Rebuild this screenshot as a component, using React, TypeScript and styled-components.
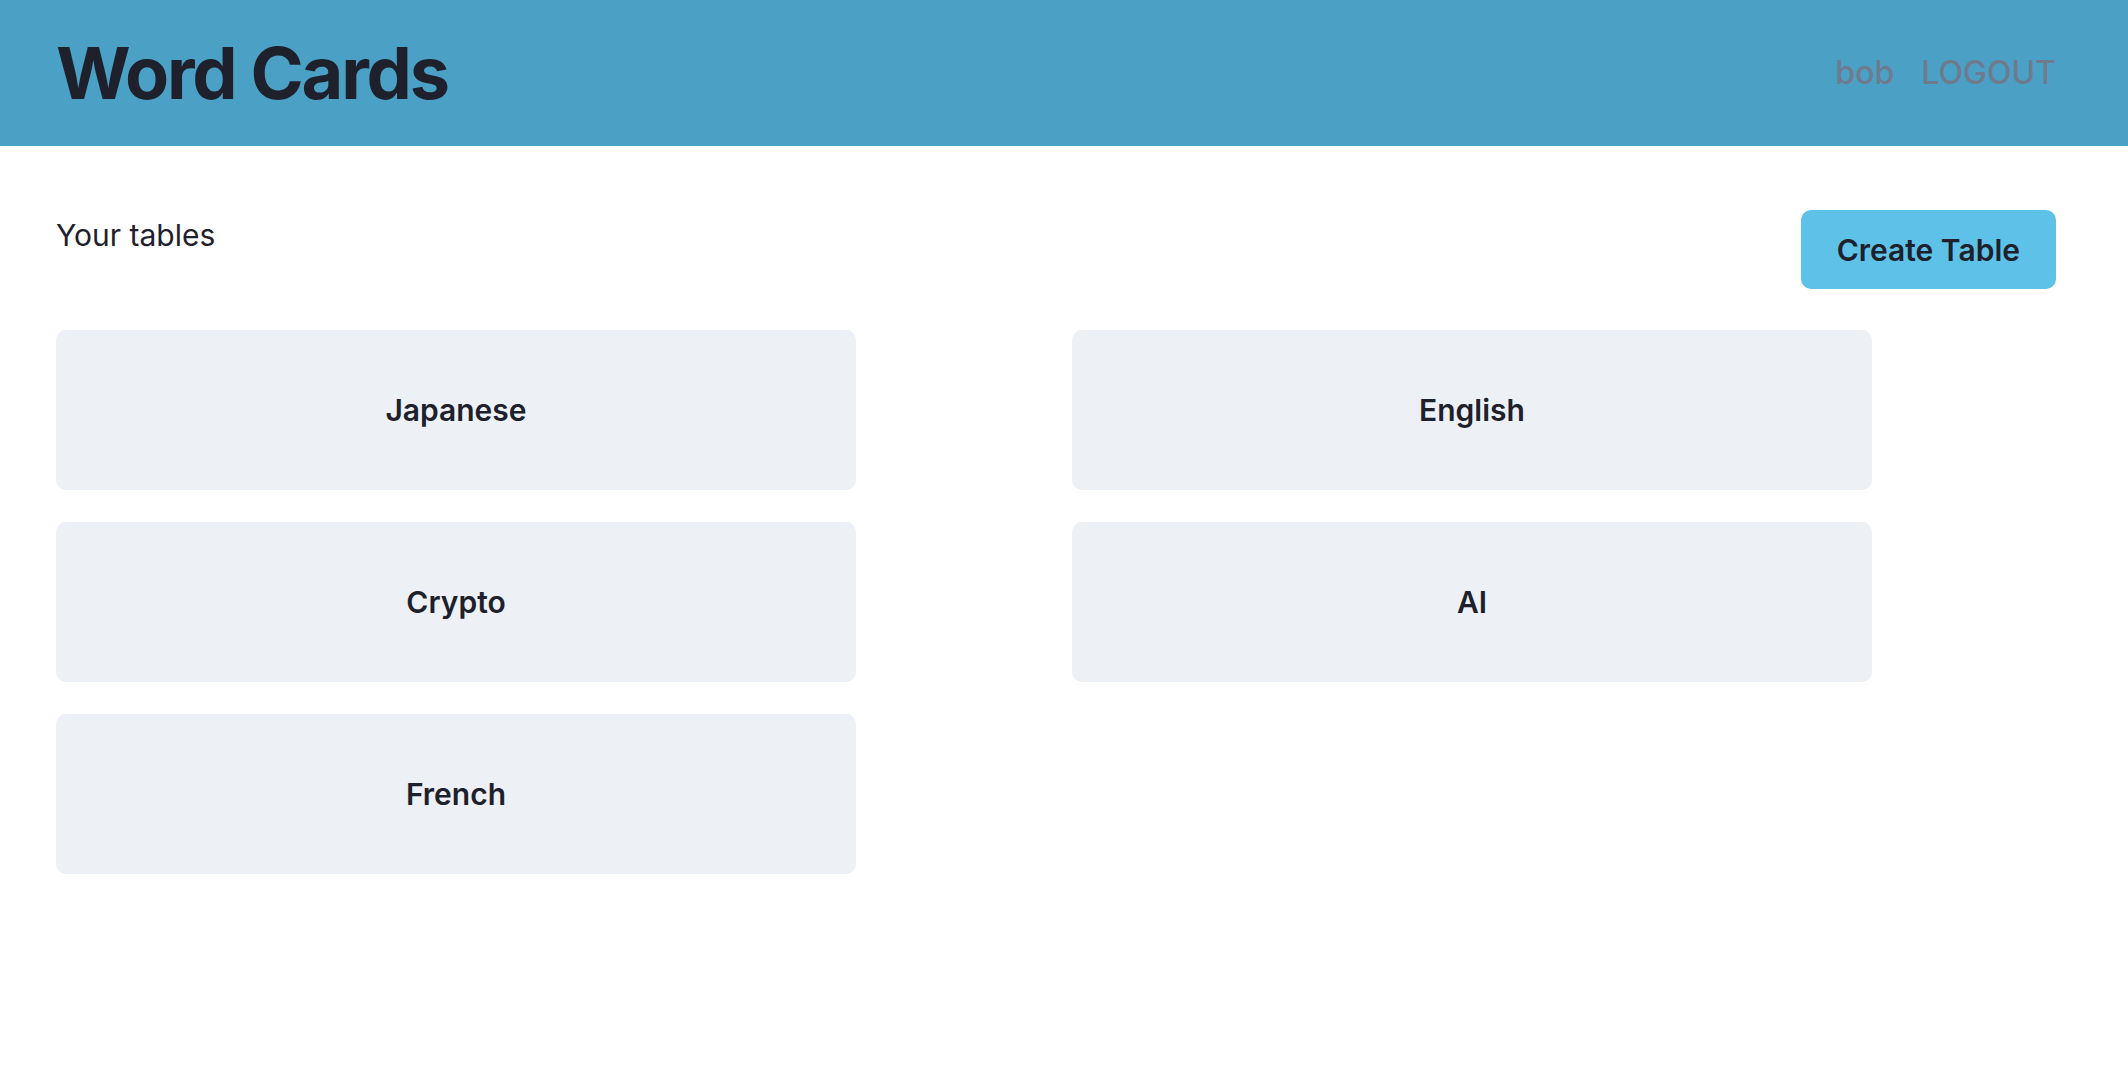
import React from "react"
import styled, {createGlobalStyle} from "styled-components"

const GlobalStyle = createGlobalStyle`
  body {
    margin: 0;
    font-family: Inter, "Noto Sans", "Liberation Sans", sans-serif;
    background: #ffffff;
    color: #1e212c;
  }
`

const StyledHeader = styled.header`
  display: flex;
  justify-content: space-between;
  align-items: center;
  height: 146px;
  padding: 0 72px 0 56px;
  background: #4ba0c6;
`

const StyledTitle = styled.h1`
  margin: 0;
  font-size: 72px;
  line-height: 1;
  font-weight: 700;
  letter-spacing: -0.03em;
  color: #1e212c;
`

const StyledNav = styled.nav`
  display: flex;
  align-items: center;
  gap: 27px;
`

const StyledNavItem = styled.span`
  font-size: 32px;
  line-height: 36px;
  font-weight: 500;
  color: #6f7a8c;
  cursor: pointer;
`

const StyledMain = styled.main`
  padding: 64px 72px 0 56px;
`

const TopRow = styled.div`
  display: flex;
  justify-content: space-between;
  align-items: flex-start;
`

const StyledLabel = styled.h2`
  margin: 7px 0 0;
  font-size: 30px;
  line-height: 36px;
  font-weight: 400;
  color: #1e212c;
`

const StyledButton = styled.button`
  display: flex;
  align-items: center;
  justify-content: center;
  height: 79px;
  padding: 0 36px;
  border: none;
  border-radius: 10px;
  background: #5ec1e7;
  font-family: inherit;
  font-size: 30px;
  font-weight: 600;
  color: #1e212c;
  cursor: pointer;
`

const CardGrid = styled.div`
  display: grid;
  grid-template-columns: repeat(2, 800px);
  column-gap: 216px;
  row-gap: 32px;
  margin-top: 41px;
`

const StyledCard = styled.div`
  display: flex;
  align-items: center;
  justify-content: center;
  height: 160px;
  border-radius: 10px;
  background: #edf1f6;
  font-size: 30px;
  font-weight: 600;
  color: #1e212c;
  cursor: pointer;
`

const tables = ["Japanese", "English", "Crypto", "AI", "French"]

const App = (): React.JSX.Element => {
    return (
        <>
            <GlobalStyle/>
            <StyledHeader>
                <StyledTitle>Word Cards</StyledTitle>
                <StyledNav>
                    <StyledNavItem>bob</StyledNavItem>
                    <StyledNavItem>LOGOUT</StyledNavItem>
                </StyledNav>
            </StyledHeader>
            <StyledMain>
                <TopRow>
                    <StyledLabel>Your tables</StyledLabel>
                    <StyledButton>Create Table</StyledButton>
                </TopRow>
                <CardGrid>
                    {tables.map(name => (
                        <StyledCard key={name}>{name}</StyledCard>
                    ))}
                </CardGrid>
            </StyledMain>
        </>
    )
}

export default App
